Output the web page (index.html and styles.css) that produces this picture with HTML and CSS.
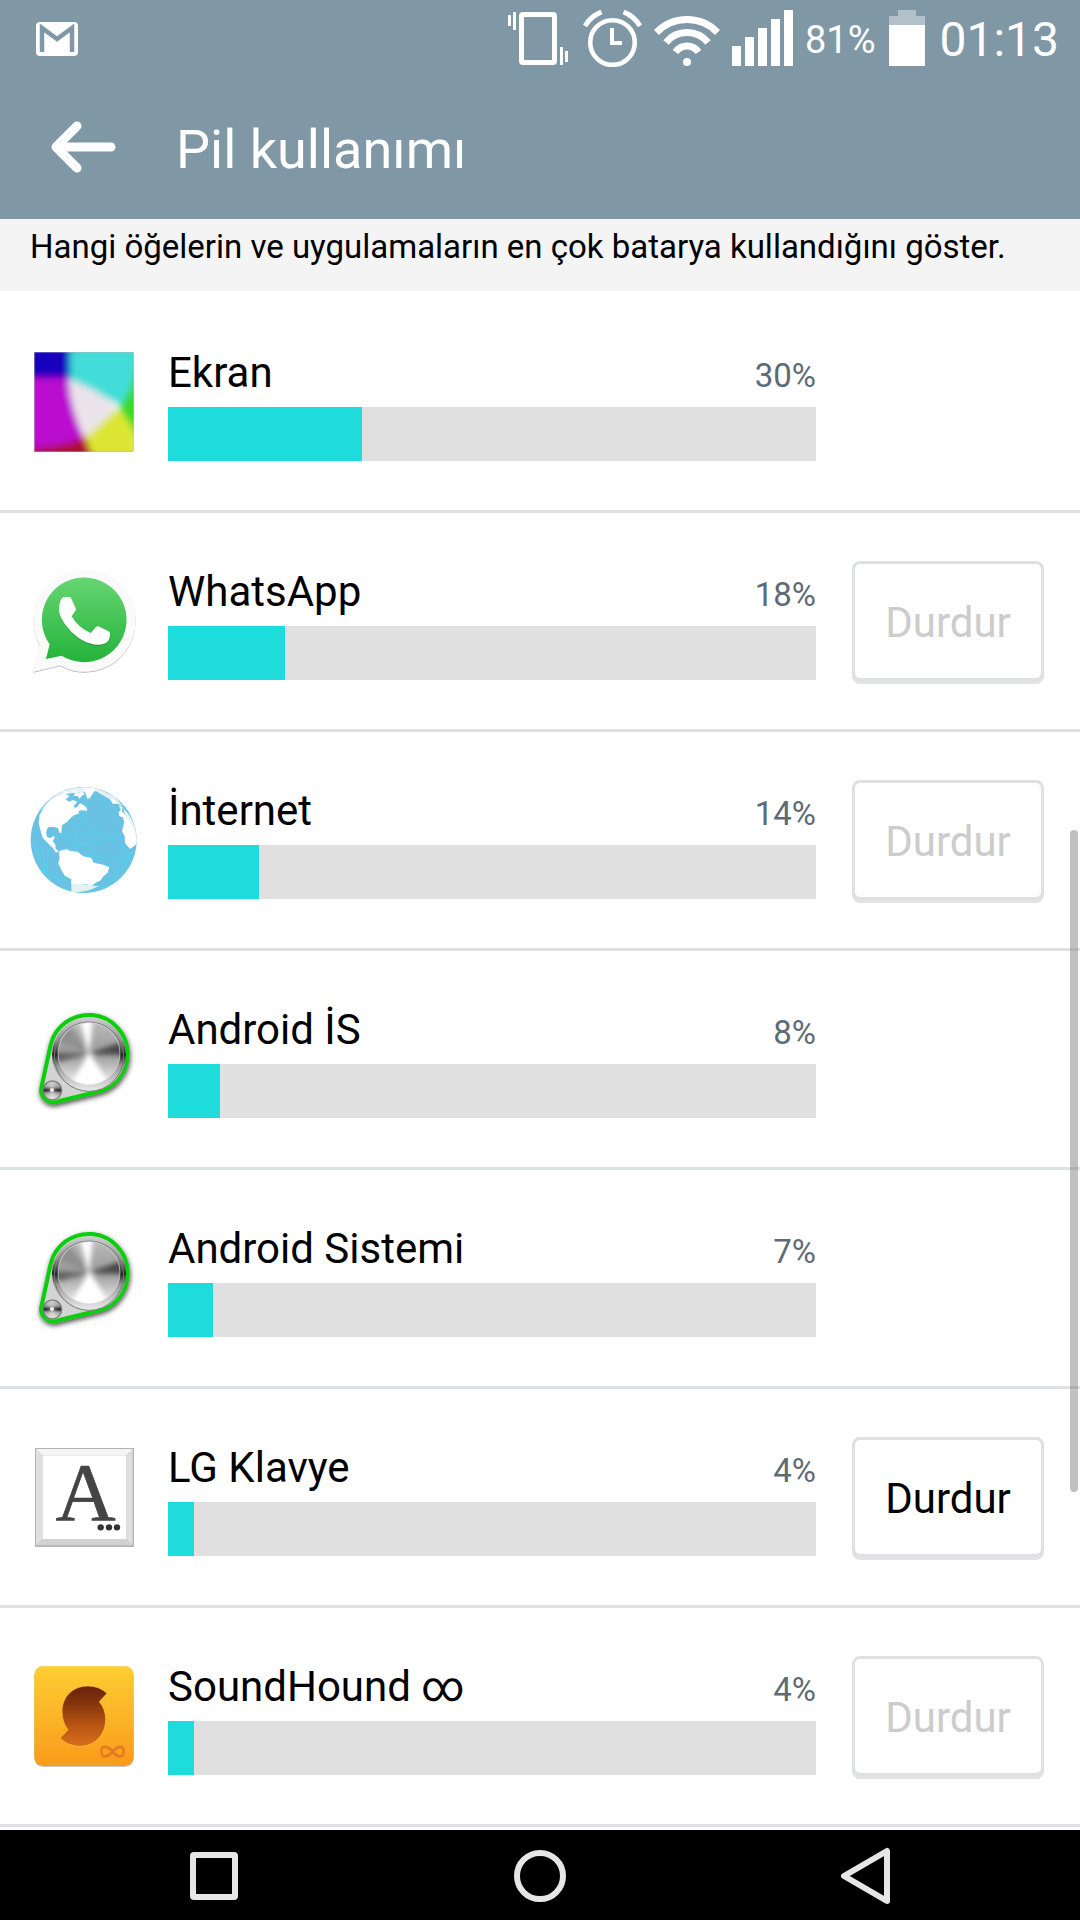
FILE: index.html
```html
<!DOCTYPE html>
<html lang="tr">

<head>
    <meta charset="UTF-8">
    <meta name="viewport" content="width=device-width, initial-scale=1.0">
    <title>Pil kullanımı</title>
    <link rel="stylesheet" href="styles.css">
</head>

<body>
    <div class="status-bar">
        <svg class="gmail" width="42" height="34" viewBox="0 0 42 34">
            <rect width="42" height="34" rx="4" fill="#fff" />
            <path d="M6 30V6L21 17L36 6V30" fill="none" stroke="#8097a5" stroke-width="4.5" />
        </svg>
        <!-- vibrate -->
        <svg width="63" height="57" viewBox="0 0 63 57" fill="#fff">
            <path d="M0 5h3v11h-3zM5 2h3v18h-3zM52 37h3v18h-3zM57 41h3v11h-3z" />
            <rect x="13.500" y="4.500" width="33" height="48" rx="1.500" fill="none" stroke="#fff" stroke-width="5" />
        </svg>
        <!-- alarm -->
        <svg width="59" height="57" viewBox="0 0 59 57" fill="none" stroke="#fff">
            <circle cx="29.500" cy="32.500" r="22.300" stroke-width="4.600" />
            <path d="M29 18v15h10" stroke-width="4" />
            <path d="M2 16Q8 6 18.500 2M57 16Q51 6 40.500 2" stroke-width="5" />
        </svg>
        <!-- wifi -->
        <svg width="66" height="57" viewBox="0 0 66 57" fill="none" stroke="#fff" stroke-width="7">
            <path d="M2.500 22.500Q15 9.500 33 9.500T63.500 22.500" />
            <path d="M12 32.500Q20 22.500 33 22.500T54 32.500" />
            <path d="M21.500 42Q26 36 33 36T44.500 42" />
            <circle cx="33" cy="52" r="4" fill="#fff" stroke="none" />
        </svg>
        <!-- signal -->
        <svg width="61" height="57" viewBox="0 0 61 57" fill="#fff">
            <path d="M0 36h9v20h-9zM13 27h9v29h-9zM26 18h9v38h-9zM39 9h9v47h-9zM52 0h9v56h-9z" />
        </svg>
        <span class="battery-level">81%</span>
        <svg width="36" height="57" viewBox="0 0 36 57">
            <path d="M9 0h18v6h9v9h-36v-9h9z" fill="#b2c1c9" />
            <path d="M0 15h36v41h-36z" fill="#fff" />
        </svg>
        <span class="clock">01:13</span>
    </div>

    <header class="header">
        <button class="back-btn" aria-label="Geri">
            <svg width="66" height="54" viewBox="0 0 66 54" fill="none" stroke="#fff" stroke-width="9"
                stroke-linecap="round" stroke-linejoin="round">
                <path d="M27 6L6 27L27 48M9 27H61" />
            </svg>
        </button>
        <h1>Pil kullanımı</h1>
    </header>

    <p class="description">Hangi öğelerin ve uygulamaların en çok batarya kullandığını göster.</p>

    <main class="list">
        <div class="row">
            <svg class="icon" viewBox="90 54 324 324">
                <defs>
                    <clipPath id="screenClip">
                        <rect x="103" y="67" width="298" height="298" />
                    </clipPath>
                    <filter id="soft" x="-20%" y="-20%" width="140%" height="140%">
                        <feGaussianBlur stdDeviation="11" />
                    </filter>
                </defs>
                <g clip-path="url(#screenClip)">
                    <g filter="url(#soft)">
                        <path d="M60 20H215V144H60z" fill="#1200bd" />
                        <path d="M212 20H440V220H350L213 150Q205 110 212 20z" fill="#43ddd8" />
                        <path d="M440 100V310H401L355 230Q388 195 402 140z" fill="#38dc22" />
                        <path d="M60 143H206Q212 240 254 326Q190 352 60 362z" fill="#ba0ccf" />
                        <path d="M60 358Q200 352 258 318L290 410H60z" fill="#b00c30" />
                        <path d="M254 320L350 237Q388 270 412 320V410H292z" fill="#dce631" />
                        <path d="M206 150Q290 174 352 232Q310 280 256 322Q212 240 206 150z" fill="#ebe4eb" />
                    </g>
                    <rect x="104" y="68" width="296" height="296" fill="none" stroke="#888" stroke-opacity=".4"
                        stroke-width="3" />
                </g>
            </svg>
            <div class="usage">
                <div class="usage-text"><label for="ekran">Ekran</label><span class="percent">30%</span></div>
                <progress id="ekran" value="30" max="100"></progress>
            </div>
            <div class="action"></div>
        </div>

        <div class="row">
            <svg class="icon" viewBox="90 81 324 324">
                <defs>
                    <linearGradient id="green" x1="0" y1="0" x2="0" y2="1">
                        <stop offset="0" stop-color="#67d572" />
                        <stop offset="1" stop-color="#23b33a" />
                    </linearGradient>
                    <filter id="drop" x="-10%" y="-10%" width="120%" height="120%">
                        <feDropShadow dx="0" dy="2" stdDeviation="2" flood-opacity=".45" />
                    </filter>
                </defs>
                <path d="M100 395L121 318A153 153 0 1 1 180 376z" fill="#fafafa" filter="url(#drop)" />
                <path d="M138 357L149 313A127 127 0 1 1 185 347z" fill="url(#green)" />
                <path d="M177 205Q178 180 190 171H208Q213 172 215 178L228 208Q228 212 215 229Q235 264 272 279L288 261Q293 257 298 260L326 274Q330 276 330 283Q329 302 318 309Q302 317 280 313Q232 303 194 251Q176 226 177 205z"
                    fill="#fff" filter="url(#drop)" />
            </svg>
            <div class="usage">
                <div class="usage-text"><label for="whatsapp">WhatsApp</label><span class="percent">18%</span></div>
                <progress id="whatsapp" value="18" max="100"></progress>
            </div>
            <div class="action"><button class="stop-btn" disabled>Durdur</button></div>
        </div>

        <div class="row">
            <svg class="icon" viewBox="90 78 324 324">
                <defs>
                    <clipPath id="globeClip">
                        <circle cx="251" cy="240" r="159" />
                    </clipPath>
                </defs>
                <g clip-path="url(#globeClip)">
                    <rect x="90" y="78" width="324" height="324" fill="#69c1e4" />
                    <path d="M120 160L125 250L135 345L150 245M135 345L100 240M135 345L225 255L375 227M160 233L282 213L355 148M248 165L222 255L175 205M248 165L282 213L262 290M282 213L372 262L393 292L275 330M393 292L315 385L405 270M135 345L220 362L315 385M250 118L350 120L372 170M248 165L265 110M315 385L215 340M262 290L393 292"
                        fill="none" stroke="#50d3ea" stroke-width="3" />
                    <path d="M120 157Q146 110 198 90Q240 76 290 84L345 111L370 140L350 130L288 94L200 101L160 116z M370 145Q412 185 413 248L400 260L378 180z M214 362L240 371L295 379Q255 400 214 396z"
                        fill="#e5f1f5" />
                    <g fill="#fff">
                        <path d="M158 114L195 101L209 108L197 118L207 125L220 120L232 126L220 139L228 144L240 130L250 134L260 143L262 152L244 151L233 155L239 160L222 166L211 175L202 185L186 196L184 219L178 218L174 204L157 200L144 202L138 216L141 230L150 235L160 229L165 230L158 244L166 253L167 266L176 274L168 278L158 263L143 249L128 233L121 209L116 188L119 164L134 141z" />
                        <path d="M190 93L202 94L206 101L192 100zM213 91L229 93L235 100L246 95L254 102L244 109L239 116L232 108L220 107L226 100zM252 84L286 83L282 95L270 114L262 117L256 99z" />
                        <path d="M328 113L345 122L353 132L338 131zM356 136L367 141L366 154L375 164L378 175L389 183L403 212L410 240Q408 256 401 259L390 267L375 249L374 229L366 214L373 186L368 172L357 168L356 156L363 149z" />
                        <path d="M176 275L185 270L201 268L211 273L232 275L250 289L274 294L281 308L310 314L328 322L323 338L309 350L302 361L287 368L275 377L257 372L214 372L214 358L194 347L183 328L175 310L179 293z" />
                    </g>
                </g>
            </svg>
            <div class="usage">
                <div class="usage-text"><label for="internet">İnternet</label><span class="percent">14%</span></div>
                <progress id="internet" value="14" max="100"></progress>
            </div>
            <div class="action"><button class="stop-btn" disabled>Durdur</button></div>
        </div>

        <div class="row">
            <svg class="icon" viewBox="90 45 324 324">
                <defs>
                    <linearGradient id="rim" x1="0" y1="0" x2="0" y2="1">
                        <stop offset="0" stop-color="#ccc" />
                        <stop offset=".3" stop-color="#999" />
                        <stop offset=".5" stop-color="#222" />
                        <stop offset=".65" stop-color="#999" />
                        <stop offset="1" stop-color="#eee" />
                    </linearGradient>
                    <linearGradient id="face" x1="0" y1="0" x2="0" y2="1">
                        <stop offset="0" stop-color="#bbb" />
                        <stop offset=".5" stop-color="#999" />
                        <stop offset="1" stop-color="#f2f2f2" />
                    </linearGradient>
                    <filter id="knobShadow" x="-20%" y="-20%" width="140%" height="140%">
                        <feDropShadow dx="2" dy="7" stdDeviation="8" flood-opacity=".7" />
                    </filter>
                    <filter id="brush" x="-20%" y="-20%" width="140%" height="140%">
                        <feGaussianBlur stdDeviation="8" />
                    </filter>
                    <clipPath id="faceClip">
                        <circle cx="267" cy="191" r="93" />
                    </clipPath>
                    <g id="knob">
                        <path d="M152 165A117 117 0 1 1 286 307L166 336A36 36 0 0 1 124 294z" fill="#d3d3d3"
                            stroke="#09ce0b" stroke-width="12" filter="url(#knobShadow)" />
                        <circle cx="267" cy="194" r="111" fill="url(#rim)" />
                        <circle cx="267" cy="200" r="104" fill="none" stroke="#777" stroke-width="3" />
                        <g clip-path="url(#faceClip)">
                            <circle cx="267" cy="191" r="95" fill="url(#face)" />
                            <g filter="url(#brush)">
                                <path d="M267 195L236 80H280z" fill="#fff" />
                                <path d="M267 191L160 150V100H205z" fill="#909090" />
                                <path d="M267 191L380 150V195z" fill="#484848" />
                                <path d="M267 191L150 188V222z" fill="#606060" />
                                <path d="M267 185L200 310H345z" fill="#fff" />
                            </g>
                        </g>
                        <circle cx="267" cy="191" r="93" fill="none" stroke="#ddd" stroke-opacity=".6"
                            stroke-width="3" />
                        <circle cx="157" cy="301" r="28" fill="url(#rim)" stroke="#777" stroke-width="4" />
                        <path d="M157 301L144 280H165zM157 301L143 322H169z" fill="#eee" filter="url(#brush)" />
                        <circle cx="156" cy="300" r="6" fill="#eee" />
                    </g>
                </defs>
                <use href="#knob" />
            </svg>
            <div class="usage">
                <div class="usage-text"><label for="androidOs">Android İS</label><span class="percent">8%</span></div>
                <progress id="androidOs" value="8" max="100"></progress>
            </div>
            <div class="action"></div>
        </div>

        <div class="row">
            <svg class="icon" viewBox="90 45 324 324">
                <use href="#knob" />
            </svg>
            <div class="usage">
                <div class="usage-text"><label for="androidSystem">Android Sistemi</label><span
                        class="percent">7%</span></div>
                <progress id="androidSystem" value="7" max="100"></progress>
            </div>
            <div class="action"></div>
        </div>

        <div class="row">
            <svg class="icon" viewBox="90 69 324 324">
                <rect x="105" y="84" width="297" height="297" fill="#b1b3b5" />
                <path d="M108 87H399L378 107H129z" fill="#f4f4f4" />
                <path d="M108 87L129 107V357L108 376z" fill="#e0e0e0" />
                <path d="M398 87L378 107V357L398 376z" fill="#dedede" />
                <path d="M108 376L129 357H378L398 376z" fill="#d2d2d2" />
                <rect x="129" y="107" width="249" height="250" fill="#fff" />
                <text class="key-letter" x="257" y="301" text-anchor="middle">A</text>
                <g fill="#333">
                    <circle cx="302" cy="322" r="9.500" />
                    <circle cx="327" cy="322" r="9.500" />
                    <circle cx="351" cy="322" r="9.500" />
                </g>
            </svg>
            <div class="usage">
                <div class="usage-text"><label for="klavye">LG Klavye</label><span class="percent">4%</span></div>
                <progress id="klavye" value="4" max="100"></progress>
            </div>
            <div class="action"><button class="stop-btn">Durdur</button></div>
        </div>

        <div class="row">
            <svg class="icon" viewBox="90 66 324 324">
                <defs>
                    <linearGradient id="orange" x1="0" y1="0" x2="0" y2="1">
                        <stop offset="0" stop-color="#fdce32" />
                        <stop offset="1" stop-color="#f99b1c" />
                    </linearGradient>
                    <linearGradient id="brown" x1="0" y1="0" x2="0" y2="1">
                        <stop offset="0" stop-color="#69210a" />
                        <stop offset=".3" stop-color="#86360d" />
                        <stop offset=".65" stop-color="#b95513" />
                        <stop offset="1" stop-color="#d76e19" />
                    </linearGradient>
                </defs>
                <rect x="103" y="79" width="298" height="298" rx="25" fill="url(#orange)" filter="url(#drop)" />
                <path d="M321 160Q297 138 264 138C215 138 186 174 186 215Q186 246 204 270L180 294Q205 319 238 319C287 319 317 282 317 238Q317 208 298 185z"
                    fill="url(#brown)" stroke="#fdc52f" stroke-width="2" />
                <path d="M338 335C325 319 303 313 304 335S325 351 338 335S372 313 371 335S351 351 338 335z"
                    fill="none" stroke="#e57c21" stroke-width="8" />
            </svg>
            <div class="usage">
                <div class="usage-text"><label for="soundhound">SoundHound ∞</label><span class="percent">4%</span>
                </div>
                <progress id="soundhound" value="4" max="100"></progress>
            </div>
            <div class="action"><button class="stop-btn" disabled>Durdur</button></div>
        </div>
    </main>
    <div class="scrollbar"></div>

    <nav class="nav-bar">
        <button aria-label="Son uygulamalar">
            <svg width="60" height="60" viewBox="0 0 60 60">
                <rect x="9" y="9" width="42" height="42" rx="1" />
            </svg>
        </button>
        <button aria-label="Ana ekran">
            <svg width="60" height="60" viewBox="0 0 60 60">
                <circle cx="30" cy="30" r="23" />
            </svg>
        </button>
        <button aria-label="Geri">
            <svg width="60" height="60" viewBox="0 0 60 60">
                <path d="M8 30L51 5V55z" />
            </svg>
        </button>
    </nav>
</body>

</html>
```
FILE: styles.css
```css
* {
    box-sizing: border-box;
}

body {
    margin: 0;
    min-height: 100vh;
    display: flex;
    flex-direction: column;
    position: relative;
    background: #fff;
    color: #000;
    font-family: Roboto, sans-serif;
}

svg {
    display: block;
    flex-shrink: 0;
}

button {
    font-family: inherit;
    cursor: pointer;
}

.status-bar {
    display: flex;
    align-items: center;
    gap: 12px;
    height: 75px;
    padding: 2px 21px 0 36px;
    background: #8097a5;
    color: #fff;
}

.gmail {
    margin-right: auto;
}

.battery-level {
    margin-right: 2px;
    padding-top: 3px;
    font-size: 38px;
    line-height: 48px;
}

.clock {
    margin-left: 2px;
    padding-top: 3px;
    font-size: 48px;
    line-height: 56px;
}

.header {
    display: flex;
    align-items: center;
    height: 144px;
    padding: 0 50px;
    background: #8097a5;
    color: #fff;
}

.back-btn {
    padding: 0;
    border: none;
    background: none;
}

h1 {
    margin: 0 0 0 60px;
    padding-top: 5px;
    font-size: 54px;
    font-weight: 400;
    line-height: 64px;
}

.description {
    margin: 0;
    padding: 9px 30px 25px;
    background: #f4f4f4;
    font-size: 33px;
    line-height: 38px;
}

.list {
    flex: 1;
    padding-top: 3px;
}

.row {
    display: flex;
    align-items: center;
    min-height: 219px;
    padding: 0 36px 0 30px;
    border-bottom: 3px solid #dde1e1;
}

.icon {
    width: 108px;
    height: 108px;
}

.key-letter {
    font-family: "Liberation Serif", serif;
    font-size: 250px;
    fill: #444;
    stroke: #444;
    stroke-width: 2;
}

.usage {
    flex: 1;
    margin: 5px 36px 0 30px;
}

.usage-text {
    display: flex;
    align-items: baseline;
    justify-content: space-between;
    margin-bottom: 9px;
    font-size: 42px;
    line-height: 50px;
}

.percent {
    font-size: 33px;
    line-height: 38px;
    color: #5d6b75;
}

progress {
    display: block;
    width: 100%;
    height: 54px;
    border: none;
    background: #e0e0e0;
    appearance: none;
    -webkit-appearance: none;
}

progress::-webkit-progress-bar {
    background: #e0e0e0;
}

progress::-webkit-progress-value {
    background: #1fdcdc;
}

.action {
    width: 192px;
}

.stop-btn {
    width: 100%;
    height: 120px;
    padding: 3px 0 0;
    border: 3px solid #dde1e1;
    border-radius: 8px;
    background: #fff;
    box-shadow: 0 3px 0 #e3e3e3;
    color: #000;
    font-size: 42px;
}

.stop-btn:disabled {
    color: #ccc;
    cursor: default;
}

.scrollbar {
    position: absolute;
    top: 830px;
    right: 2px;
    width: 8px;
    height: 662px;
    border-radius: 4px;
    background: rgba(130, 130, 130, 0.5);
}

.nav-bar {
    display: flex;
    height: 90px;
    padding: 2px 51px 0;
    background: #000;
}

.nav-bar button {
    flex: 1;
    display: flex;
    align-items: center;
    justify-content: center;
    padding: 0;
    border: none;
    background: none;
}

.nav-bar svg {
    fill: none;
    stroke: #e6e6e6;
    stroke-width: 6;
    stroke-linejoin: round;
}
```
